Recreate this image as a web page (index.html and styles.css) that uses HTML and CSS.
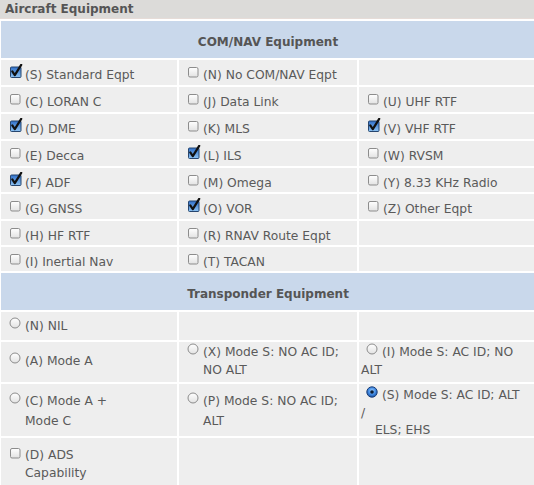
FILE: index.html
```html
<!DOCTYPE html>
<html>
<head>
<meta charset="utf-8">
<link rel="stylesheet" href="styles.css">
</head>
<body>
<svg class="defs" width="0" height="0" aria-hidden="true">
  <defs>
    <linearGradient id="gOff" x1="0" y1="0" x2="0" y2="1">
      <stop offset="0" stop-color="#ffffff"/>
      <stop offset="1" stop-color="#e2e2e2"/>
    </linearGradient>
    <linearGradient id="gOn" x1="0" y1="0" x2="0" y2="1">
      <stop offset="0" stop-color="#2f6fc9"/>
      <stop offset="1" stop-color="#8ec3f2"/>
    </linearGradient>
    <radialGradient id="gRad" cx="0.5" cy="0.4" r="0.6">
      <stop offset="0" stop-color="#9fd0ff"/>
      <stop offset="0.6" stop-color="#3d86e0"/>
      <stop offset="1" stop-color="#1c4f9c"/>
    </radialGradient>
    <symbol id="cbOff" viewBox="0 0 14 14">
      <rect x="0.5" y="3.5" width="9.5" height="9.5" rx="1.5" fill="url(#gOff)" stroke="#8c8c8c"/>
    </symbol>
    <symbol id="cbOn" viewBox="0 0 14 14">
      <rect x="0.5" y="3" width="10.5" height="10.5" rx="1" fill="url(#gOn)" stroke="#27466f"/>
      <path d="M2.3 7.4 L4.8 11.2 L11.2 0.8" fill="none" stroke="#111" stroke-width="2.2" stroke-linecap="round" stroke-linejoin="round"/>
    </symbol>
    <symbol id="rdOff" viewBox="0 0 12 12">
      <circle cx="6" cy="6" r="5" fill="url(#gOff)" stroke="#8c8c8c"/>
    </symbol>
    <symbol id="rdOn" viewBox="0 0 12 12">
      <circle cx="6" cy="6" r="5.2" fill="url(#gRad)" stroke="#1b3f78"/>
      <circle cx="6" cy="6" r="1.8" fill="#0c1c33"/>
    </symbol>
  </defs>
</svg>

<div class="title">Aircraft Equipment</div>

<table class="eq">
  <colgroup><col class="c1"><col class="c2"><col class="c3"></colgroup>
  <tr><th colspan="3" class="sec">COM/NAV Equipment</th></tr>
  <tr class="r">
    <td><label class="opt"><svg class="cb"><use href="#cbOn"/></svg><span>(S) Standard Eqpt</span></label></td>
    <td><label class="opt"><svg class="cb"><use href="#cbOff"/></svg><span>(N) No COM/NAV Eqpt</span></label></td>
    <td></td>
  </tr>
  <tr class="r">
    <td><label class="opt"><svg class="cb"><use href="#cbOff"/></svg><span>(C) LORAN C</span></label></td>
    <td><label class="opt"><svg class="cb"><use href="#cbOff"/></svg><span>(J) Data Link</span></label></td>
    <td><label class="opt"><svg class="cb"><use href="#cbOff"/></svg><span>(U) UHF RTF</span></label></td>
  </tr>
  <tr class="r">
    <td><label class="opt"><svg class="cb"><use href="#cbOn"/></svg><span>(D) DME</span></label></td>
    <td><label class="opt"><svg class="cb"><use href="#cbOff"/></svg><span>(K) MLS</span></label></td>
    <td><label class="opt"><svg class="cb"><use href="#cbOn"/></svg><span>(V) VHF RTF</span></label></td>
  </tr>
  <tr class="r">
    <td><label class="opt"><svg class="cb"><use href="#cbOff"/></svg><span>(E) Decca</span></label></td>
    <td><label class="opt"><svg class="cb"><use href="#cbOn"/></svg><span>(L) ILS</span></label></td>
    <td><label class="opt"><svg class="cb"><use href="#cbOff"/></svg><span>(W) RVSM</span></label></td>
  </tr>
  <tr class="r short">
    <td><label class="opt"><svg class="cb"><use href="#cbOn"/></svg><span>(F) ADF</span></label></td>
    <td><label class="opt"><svg class="cb"><use href="#cbOff"/></svg><span>(M) Omega</span></label></td>
    <td><label class="opt"><svg class="cb"><use href="#cbOff"/></svg><span>(Y) 8.33 KHz Radio</span></label></td>
  </tr>
  <tr class="r">
    <td><label class="opt"><svg class="cb"><use href="#cbOff"/></svg><span>(G) GNSS</span></label></td>
    <td><label class="opt"><svg class="cb"><use href="#cbOn"/></svg><span>(O) VOR</span></label></td>
    <td><label class="opt"><svg class="cb"><use href="#cbOff"/></svg><span>(Z) Other Eqpt</span></label></td>
  </tr>
  <tr class="r short">
    <td><label class="opt"><svg class="cb"><use href="#cbOff"/></svg><span>(H) HF RTF</span></label></td>
    <td><label class="opt"><svg class="cb"><use href="#cbOff"/></svg><span>(R) RNAV Route Eqpt</span></label></td>
    <td></td>
  </tr>
  <tr class="r short">
    <td><label class="opt"><svg class="cb"><use href="#cbOff"/></svg><span>(I) Inertial Nav</span></label></td>
    <td><label class="opt"><svg class="cb"><use href="#cbOff"/></svg><span>(T) TACAN</span></label></td>
    <td></td>
  </tr>

  <tr><th colspan="3" class="sec">Transponder Equipment</th></tr>
  <tr class="t t1">
    <td class="p5"><label class="opt"><svg class="rd"><use href="#rdOff"/></svg><span>(N) NIL</span></label></td>
    <td></td>
    <td></td>
  </tr>
  <tr class="t t2">
    <td class="p10"><label class="opt"><svg class="rd"><use href="#rdOff"/></svg><span>(A) Mode A</span></label></td>
    <td class="p1"><label class="opt hang"><svg class="rd"><use href="#rdOff"/></svg><span>(X) Mode S: NO AC ID;<br>NO ALT</span></label></td>
    <td class="p1"><label class="flow"><svg class="rd"><use href="#rdOff"/></svg>(I) Mode S: AC ID; NO<br>ALT</label></td>
  </tr>
  <tr class="t t3">
    <td class="p7 wide"><label class="opt hang"><svg class="rd"><use href="#rdOff"/></svg><span>(C) Mode A +<br>Mode C</span></label></td>
    <td class="p7 wide"><label class="opt hang"><svg class="rd"><use href="#rdOff"/></svg><span>(P) Mode S: NO AC ID;<br>ALT</span></label></td>
    <td class="p3 tight"><label class="flow"><svg class="rd"><use href="#rdOn"/></svg>(S) Mode S: AC ID; ALT<br>/<br><span class="ind">ELS; EHS</span></label></td>
  </tr>
  <tr class="t t4">
    <td class="p8"><label class="opt hang"><svg class="cb"><use href="#cbOff"/></svg><span>(D) ADS<br>Capability</span></label></td>
    <td></td>
    <td></td>
  </tr>
</table>
</body>
</html>
```

FILE: styles.css
```css
html, body {
  margin: 0;
  padding: 0;
  background: #ffffff;
  overflow: hidden;
}

body {
  font-family: "DejaVu Sans", Verdana, sans-serif;
  font-size: 12.3px;
  color: #5a5a5a;
}

.defs {
  position: absolute;
  width: 0;
  height: 0;
  overflow: hidden;
}

.title {
  height: 18px;
  line-height: 19px;
  padding-left: 5px;
  background: #dcdbd9;
  border-bottom: 1px solid #e6dcd8;
  font-weight: bold;
  font-size: 12px;
  color: #555555;
}

.eq {
  border-collapse: separate;
  border-spacing: 2px;
  table-layout: fixed;
  width: 538px;
  margin-left: -1px;
}

.c1 { width: 176px; }
.c2 { width: 178px; }
.c3 { width: 176px; }

.sec {
  height: 37px;
  padding: 4px 0 0;
  box-sizing: border-box;
  background: #c9d8eb;
  font-weight: bold;
  font-size: 12px;
  text-align: center;
  color: #555555;
}

td {
  background: #eeeeee;
  padding: 0 2px;
  vertical-align: top;
}

.r { height: 25px; }
.r.short { height: 24px; }

.r td {
  padding-top: 8px;
  padding-bottom: 0;
  line-height: 14px;
}

.r .opt {
  height: 14px;
}

.t td {
  line-height: 18px;
  padding-bottom: 0;
}

.t1 { height: 28px; }
.t2 { height: 40px; }
.t3 { height: 52px; }
.t4 { height: 52px; }

.p1 { padding-top: 1px; }
.p3 { padding-top: 3px; }
.p5 { padding-top: 5px; }
.p7 { padding-top: 7px; }
.p8 { padding-top: 8px; }
.p10 { padding-top: 10px; }

.t td.wide { line-height: 20px; }
.t td.tight { line-height: 17.5px; }
.tight .flow {
  display: block;
  height: 49px;
}

.opt {
  display: flex;
  align-items: center;
}

.opt.hang {
  align-items: flex-start;
}

.cb {
  width: 14px;
  height: 14px;
  margin: 0 1px 0 7px;
  flex: none;
  position: relative;
  top: -4px;
}

.hang .cb {
  margin-top: 3px;
}

.rd {
  width: 12px;
  height: 12px;
  margin: 0 4px 0 6px;
  flex: none;
  position: relative;
  top: -3px;
}

.hang .rd {
  margin-top: 3px;
}

.wide .hang .rd {
  margin-top: 4px;
}

.flow .rd {
  margin: 0 4px 0 5px;
  vertical-align: -1px;
  top: -2px;
}

.ind {
  padding-left: 14px;
}
```
